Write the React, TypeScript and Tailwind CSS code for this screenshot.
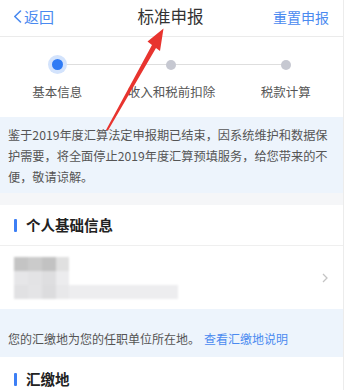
import React from "react";

const font = { fontFamily: '"Noto Sans CJK SC", "Noto Sans", sans-serif' };

export default function App() {
  return (
    <div className="relative w-[347px] h-[390px] overflow-hidden bg-white" style={font}>
      <div className="w-[344px] h-full border-r border-[#ececec] bg-white">
        {/* Nav bar */}
        <div className="h-[37px] flex items-center justify-between pl-[13px] pr-[14px] pb-[3px] border-b border-[#ebebeb]">
          <div className="flex items-center text-[#4a8af0] text-[15px] leading-none">
            <svg width="9" height="13" viewBox="0 0 9 13" className="mr-[2px]">
              <path d="M7.5 1 L1.8 6.5 L7.5 12" fill="none" stroke="#4a8af0" strokeWidth="1.6" strokeLinecap="round" strokeLinejoin="round" />
            </svg>
            <span>返回</span>
          </div>
          <div className="text-[16.5px] text-[#333] leading-none pl-[14px]">标准申报</div>
          <div className="text-[14px] text-[#4a8af0] leading-none">重置申报</div>
        </div>

        {/* Steps */}
        <div className="h-[80px] relative pt-[18px]">
          <div className="absolute left-[58px] right-[58px] top-[27px] h-px bg-[#dedede]" />
          <div className="grid grid-cols-3 relative">
            <div className="flex flex-col items-center">
              <div className="w-[19px] h-[19px] rounded-full bg-[#d3e3fc] flex items-center justify-center">
                <div className="w-[11px] h-[11px] rounded-full bg-[#2f7bf5]" />
              </div>
              <div className="mt-[12px] text-[12.5px] text-[#555] leading-none">基本信息</div>
            </div>
            <div className="flex flex-col items-center">
              <div className="h-[19px] flex items-center">
                <div className="w-[10px] h-[10px] rounded-full bg-[#c6c8d1]" />
              </div>
              <div className="mt-[12px] text-[12.5px] text-[#555] leading-none">收入和税前扣除</div>
            </div>
            <div className="flex flex-col items-center">
              <div className="h-[19px] flex items-center">
                <div className="w-[10px] h-[10px] rounded-full bg-[#c6c8d1]" />
              </div>
              <div className="mt-[12px] text-[12.5px] text-[#555] leading-none">税款计算</div>
            </div>
          </div>
        </div>

        {/* Notice */}
        <div className="bg-[#edf4fc] h-[76px] pl-[8px] pt-[8px] text-[12.2px] leading-[21px] text-[#555] whitespace-nowrap">
          鉴于2019年度汇算法定申报期已结束，因系统维护和数据保
          <br />
          护需要，将全面停止2019年度汇算预填服务，给您带来的不
          <br />
          便，敬请谅解。
        </div>
        <div className="h-[12px] bg-[#f5f6f8]" />

        {/* Section header */}
        <div className="h-[41px] flex items-center pl-[14px] border-b border-[#efefef]">
          <div className="w-[3px] h-[13px] bg-[#3d7ff5] rounded-[1px]" />
          <div className="ml-[9px] text-[14.5px] font-bold text-[#222] leading-none">个人基础信息</div>
        </div>

        {/* Blurred info row */}
        <div className="h-[63px] flex items-center justify-between pl-[14px] pr-[15px]">
          <div className="flex flex-col blur-[1px]">
            <div className="flex h-[14px]">
              <div className="w-[14px] bg-[#c4c4c4]" />
              <div className="w-[14px] bg-[#cbcbcb]" />
              <div className="w-[14px] bg-[#c2c2c2]" />
              <div className="w-[13px] bg-[#e0e0e0]" />
            </div>
            <div className="flex h-[14px]">
              <div className="w-[14px] bg-[#e6e6e8]" />
              <div className="w-[14px] bg-[#e3e3e5]" />
              <div className="w-[14px] bg-[#dedee0]" />
              <div className="w-[13px] bg-[#ececee]" />
            </div>
            <div className="flex h-[14px]">
              <div className="w-[14px] bg-[#e1e1e3]" />
              <div className="w-[14px] bg-[#e4e4e6]" />
              <div className="w-[14px] bg-[#dcdcde]" />
              <div className="w-[13px] bg-[#e8e8ea]" />
              <div className="w-[109px] bg-[#ededef]" />
            </div>
          </div>
          <svg width="6" height="10" viewBox="0 0 6 10">
            <path d="M1 1 L5 5 L1 9" fill="none" stroke="#c4c4c4" strokeWidth="1.3" />
          </svg>
        </div>

        {/* Info band */}
        <div className="h-[48px] bg-[#edf4fc] flex items-start pt-[24px] pl-[8px] text-[12px] leading-none whitespace-nowrap">
          <span className="text-[#555]">您的汇缴地为您的任职单位所在地。</span>
          <span className="ml-[4px] text-[#4a8af0]">查看汇缴地说明</span>
        </div>

        {/* Section header 2 */}
        <div className="h-[44px] flex items-center pl-[14px]">
          <div className="w-[3px] h-[13px] bg-[#3d7ff5] rounded-[1px]" />
          <div className="ml-[9px] text-[14.5px] font-bold text-[#222] leading-none">汇缴地</div>
        </div>
      </div>

      {/* Red annotation arrow */}
      <svg className="absolute left-0 top-0 pointer-events-none" width="347" height="390" viewBox="0 0 347 390">
        <polygon
          points="106,130 152,45 147.5,41.5 163.5,28.5 160,51 156,48 108,130.5"
          fill="#e8342f"
        />
      </svg>
    </div>
  );
}
